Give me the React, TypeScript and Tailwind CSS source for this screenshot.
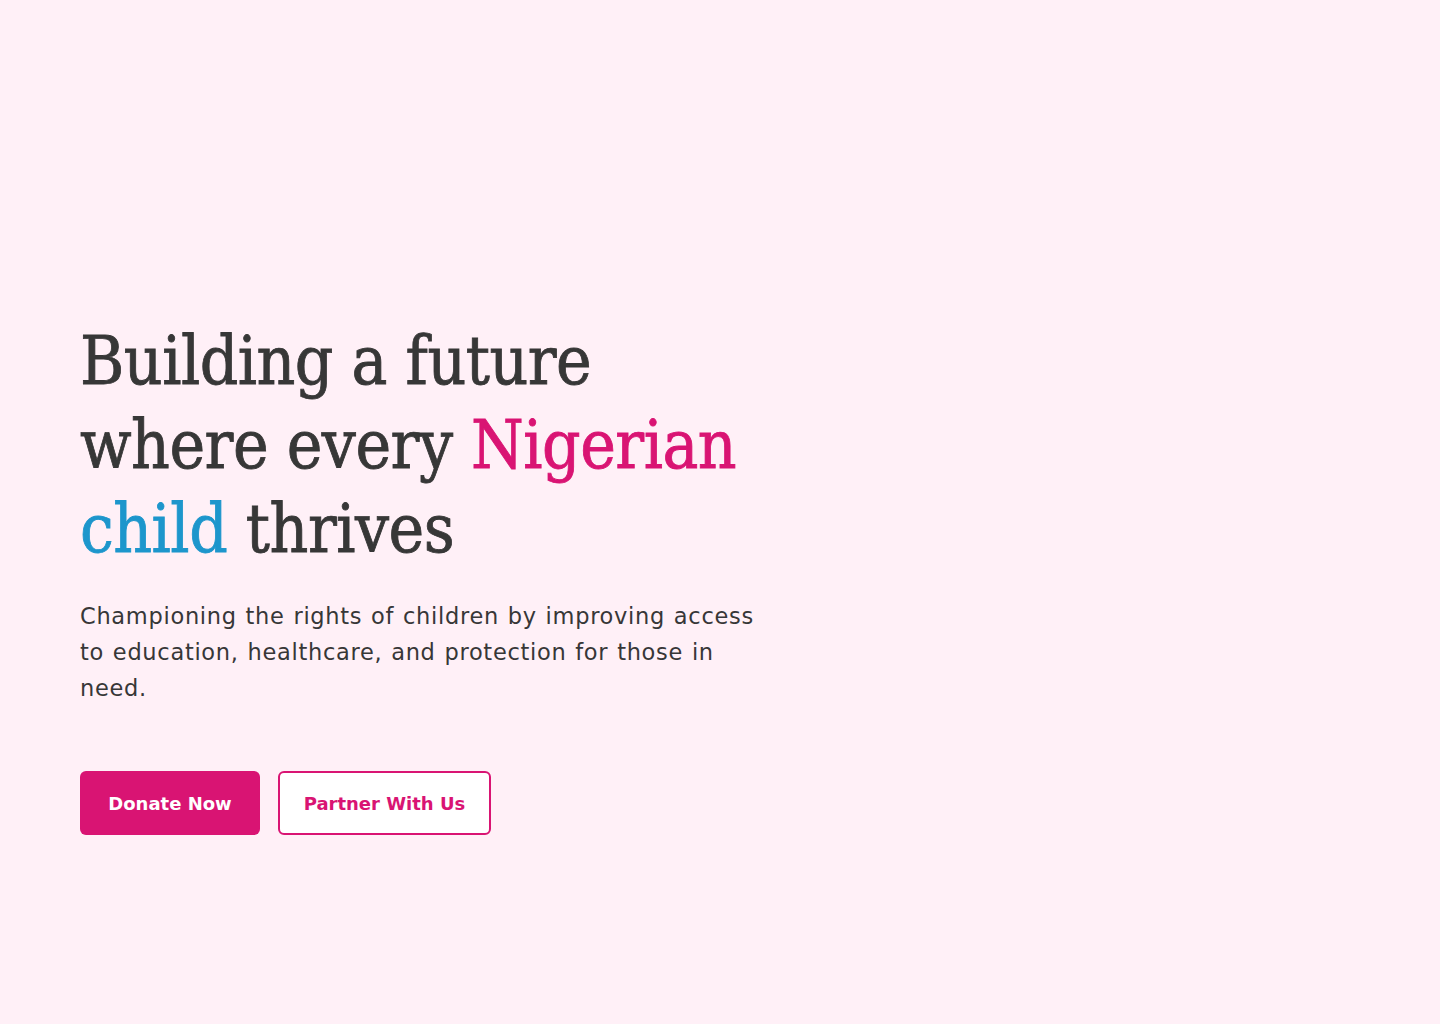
import React from 'react';

export default function App() {
  return (
    <main className="min-h-screen w-full bg-[#fff0f7] px-20 pt-[319px] pb-20">
      <div className="max-w-[720px]">
        <h1 className="font-['DejaVu_Serif_Condensed','DejaVu_Serif',serif] text-[67px] leading-[84px] text-[#373737] tracking-[-0.5px] [-webkit-text-stroke:0.8px]">
          Building a future
          <br />
          where every <span className="text-[#d91473]">Nigerian</span>
          <br />
          <span className="text-[#1d96cc]">child</span> thrives
        </h1>
        <p className="mt-[27px] w-[700px] font-['DejaVu_Sans',sans-serif] text-[22.5px] leading-[36px] tracking-[0.7px] [word-spacing:1px] text-[#373737]">
          Championing the rights of children by improving access to education, healthcare, and protection for those in need.
        </p>
        <div className="mt-[65px] flex gap-[18px]">
          <button className="h-16 w-[180px] rounded-md bg-[#d91473] font-['DejaVu_Sans',sans-serif] text-[18px] font-semibold text-white">
            Donate Now
          </button>
          <button className="h-16 w-[213px] rounded-md border-2 border-[#d91473] bg-white font-['DejaVu_Sans',sans-serif] text-[18px] font-semibold text-[#d91473]">
            Partner With Us
          </button>
        </div>
      </div>
    </main>
  );
}
